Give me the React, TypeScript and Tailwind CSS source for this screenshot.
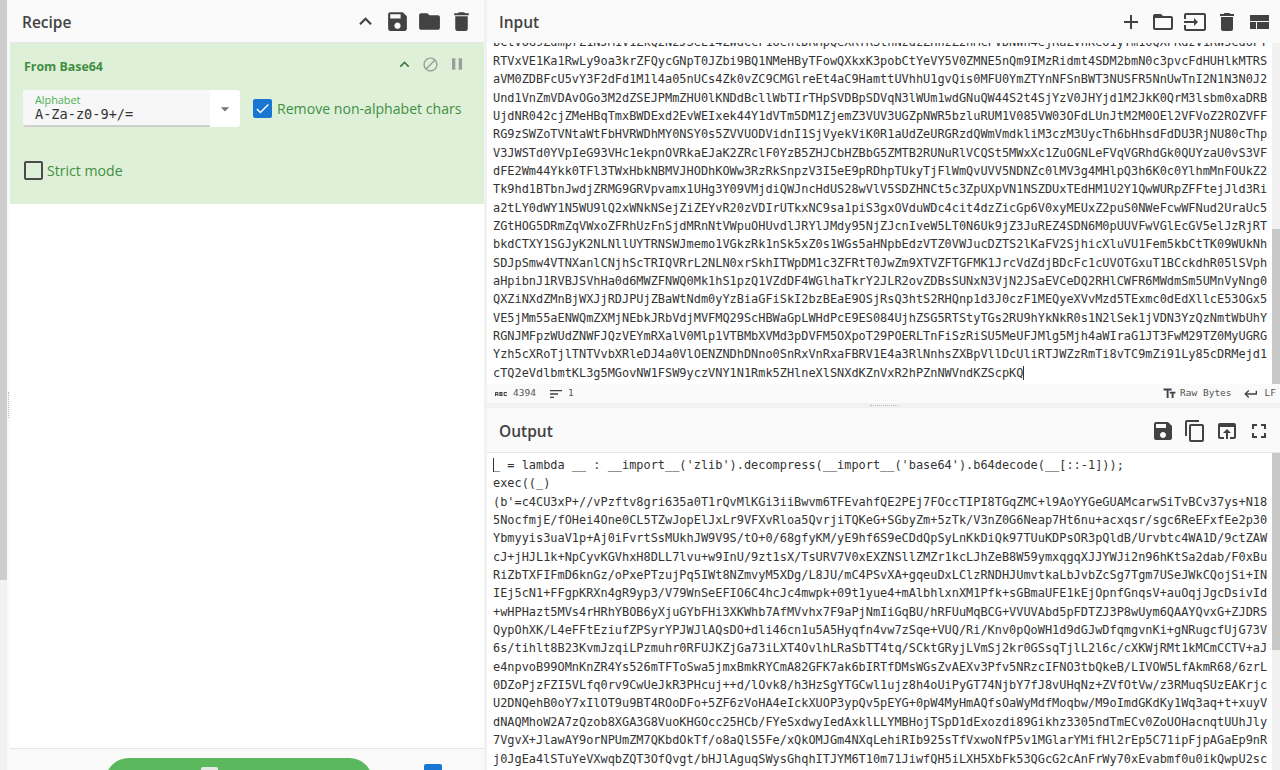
import React from "react";
import {
  MdKeyboardArrowUp, MdSave, MdFolder, MdDelete, MdBlock, MdPause, MdAdd, MdFolderOpen, MdInput,
  MdContentCopy, MdOpenInBrowser, MdFullscreen, MdKeyboardReturn, MdTextFields, MdSort, MdAbc, MdCheck, MdArrowDropDown,
} from "react-icons/md";

const inputLines = [
  "bCtVUG9ZdmprZ1NJM1V1ZkQ2N2JSeE14ZWdCcF1UenlDRHpQeXRTRStnNzdzZHnzZ2hMcFVDNWn4ejRaZVhKeU1yYm1oQXFRdzV1RW5CdUFT",
  "RTVxVE1Ka1RwLy9oa3krZFQycGNpT0JZbi9BQ1NMeHByTFowQXkxK3pobCtYeVY5V0ZMNE5nQm9IMzRidmt4SDM2bmN0c3pvcFdHUHlkMTRS",
  "aVM0ZDBFcU5vY3F2dFd1M1l4a05nUCs4Zk0vZC9CMGlreEt4aC9HamttUVhhU1gvQis0MFU0YmZTYnNFSnBWT3NUSFR5NnUwTnI2N1N3N0J2",
  "Und1VnZmVDAvOGo3M2dZSEJPMmZHU0lKNDdBcllWbTIrTHpSVDBpSDVqN3lWUm1wdGNuQW44S2t4SjYzV0JHYjd1M2JkK0QrM3lsbm0xaDRB",
  "UjdNR042cjZMeHBqTmxBWDExd2EvWEIxek44Y1dVTm5DM1ZjemZ3VUV3UGZpNWR5bzluRUM1V085VW03OFdLUnJtM2M0OEl2VFVoZ2ROZVFF",
  "RG9zSWZoTVNtaWtFbHVRWDhMY0NSY0s5ZVVUODVidnI1SjVyekViK0R1aUdZeURGRzdQWmVmdkliM3czM3UycTh6bHhsdFdDU3RjNU80cThp",
  "V3JWSTd0YVpIeG93VHc1ekpnOVRkaEJaK2ZRclF0YzB5ZHJCbHZBbG5ZMTB2RUNuRlVCQSt5MWxXc1ZuOGNLeFVqVGRhdGk0QUYzaU0vS3VF",
  "dFE2Wm44Ykk0TFl3TWxHbkNBMVJHODhKOWw3RzRkSnpzV3I5eE9pRDhpTUkyTjFlWmQvUVV5NDNZc0lMV3g4MHlpQ3h6K0c0YlhmMnFOUkZ2",
  "Tk9hd1BTbnJwdjZRMG9GRVpvamx1UHg3Y09VMjdiQWJncHdUS28wVlV5SDZHNCt5c3ZpUXpVN1NSZDUxTEdHM1U2Y1QwWURpZFFtejJld3Ri",
  "a2tLY0dWY1N5WU9lQ2xWNkNSejZiZEYvR20zVDIrUTkxNC9sa1piS3gxOVduWDc4cit4dzZicGp6V0xyMEUxZ2puS0NWeFcwWFNud2UraUc5",
  "ZGtHOG5DRmZqVWxoZFRhUzFnSjdMRnNtVWpuOHUvdlJRYlJMdy95NjZJcnIveW5LT0N6Uk9jZ3JuREZ4SDN6M0pUUVFwVGlEcGV5elJzRjRT",
  "bkdCTXY1SGJyK2NLNllUYTRNSWJmemo1VGkzRk1nSk5xZ0s1WGs5aHNpbEdzVTZ0VWJucDZTS2lKaFV2SjhicXluVU1Fem5kbCtTK09WUkNh",
  "SDJpSmw4VTNXanlCNjhScTRIQVRrL2NLN0xrSkhITWpDM1c3ZFRtT0JwZm9XTVZFTGFMK1JrcVdZdjBDcFc1cUVOTGxuT1BCckdhR05lSVph",
  "aHpibnJ1RVBJSVhHa0d6MWZFNWQ0Mk1hS1pzQ1VZdDF4WGlhaTkrY2JLR2ovZDBsSUNxN3VjN2JSaEVCeDQ2RHlCWFR6MWdmSm5UMnVyNng0",
  "QXZiNXdZMnBjWXJjRDJPUjZBaWtNdm0yYzBiaGFiSkI2bzBEaE9OSjRsQ3htS2RHQnp1d3J0czF1MEQyeXVvMzd5TExmc0dEdXllcE53OGx5",
  "VE5jMm55aENWQmZXMjNEbkJRbVdjMVFMQ29ScHBWaGpLWHdPcE9ES084UjhZSG5RTStyTGs2RU9hYkNkR0s1N2lSek1jVDN3YzQzNmtWbUhY",
  "RGNJMFpzWUdZNWFJQzVEYmRXalV0Mlp1VTBMbXVMd3pDVFM5OXpoT29POERLTnFiSzRiSU5MeUFJMlg5Mjh4aWIraG1JT3FwM29TZ0MyUGRG",
  "Yzh5cXRoTjlTNTVvbXRleDJ4a0VlOENZNDhDNno0SnRxVnRxaFBRV1E4a3RlNnhsZXBpVllDcUliRTJWZzRmTi8vTC9mZi91Ly85cDRMejd1",
  "cTQ2eVdlbmtKL3g5MGovNW1FSW9yczVNY1N1Rmk5ZHlneXlSNXdKZnVxR2hPZnNWVndKZScpKQ",
];

const outputLines = [
  "_ = lambda __ : __import__('zlib').decompress(__import__('base64').b64decode(__[::-1]));",
  "exec((_)",
  "(b'=c4CU3xP+//vPzftv8gri635a0T1rQvMlKGi3iiBwvm6TFEvahfQE2PEj7FOccTIPI8TGqZMC+l9AoYYGeGUAMcarwSiTvBCv37ys+N18",
  "5NocfmjE/fOHei4One0CL5TZwJopElJxLr9VFXvRloa5QvrjiTQKeG+SGbyZm+5zTk/V3nZ0G6Neap7Ht6nu+acxqsr/sgc6ReEFxfEe2p30",
  "Ybmyyis3uaV1p+Aj0iFvrtSsMUkhJW9V9S/tO+0/68gfyKM/yE9hf6S9eCDdQpSyLnKkDiQk97TUuKDPsOR3pQldB/Urvbtc4WA1D/9ctZAW",
  "cJ+jHJL1k+NpCyvKGVhxH8DLL7lvu+w9InU/9zt1sX/TsURV7V0xEXZNSllZMZr1kcLJhZeB8W59ymxqgqXJJYWJi2n96hKtSa2dab/F0xBu",
  "RiZbTXFIFmD6knGz/oPxePTzujPq5IWt8NZmvyM5XDg/L8JU/mC4PSvXA+gqeuDxLClzRNDHJUmvtkaLbJvbZcSg7Tgm7USeJWkCQojSi+IN",
  "IEj5cN1+FFgpKRXn4gR9yp3/V79WnSeEFIO6C4hcJc4mwpk+09t1yue4+mAlbhlxnXM1Pfk+sGBmaUFE1kEjOpnfGnqsV+auOqjJgcDsivId",
  "+wHPHazt5MVs4rHRhYBOB6yXjuGYbFHi3XKWhb7AfMVvhx7F9aPjNmIiGqBU/hRFUuMqBCG+VVUVAbd5pFDTZJ3P8wUym6QAAYQvxG+ZJDRS",
  "QypOhXK/L4eFFtEziufZPSyrYPJWJlAQsDO+dli46cn1u5A5Hyqfn4vw7zSqe+VUQ/Ri/Knv0pQoWH1d9dGJwDfqmgvnKi+gNRugcfUjG73V",
  "6s/tihlt8B23KvmJzqiLPzmuhr0RFUJKZjGa73iLXT4OvlhLRaSbTT4tq/SCktGRyjLVmSj2kr0GSsqTjlL2l6c/cXKWjRMt1kMCmCCTV+aJ",
  "e4npvoB99OMnKnZR4Ys526mTFToSwa5jmxBmkRYCmA82GFK7ak6bIRTfDMsWGsZvAEXv3Pfv5NRzcIFNO3tbQkeB/LIVOW5LfAkmR68/6zrL",
  "0DZoPjzFZI5VLfq0rv9CwUeJkR3PHcuj++d/lOvk8/h3HzSgYTGCwl1ujz8h4oUiPyGT74NjbY7fJ8vUHqNz+ZVfOtVw/z3RMuqSUzEAKrjc",
  "U2DNQehB0oY7xIlOT9u9BT4ROoDFo+5ZF6zVoHA4eIckXUOP3ypQv5pEYG+0pW4MyHmAQfsOaWyMdfMoqbw/M9oImdGKdKy1Wq3aq+t+xuyV",
  "dNAQMhoW2A7zQzob8XGA3G8VuoKHGOcc25HCb/FYeSxdwyIedAxklLLYMBHojTSpD1dExozdi89Gikhz3305ndTmECv0ZoUOHacnqtUUhJly",
  "7VgvX+JlawAY9orNPUmZM7QKbdOkTf/o8aQlS5Fe/xQkOMJGm4NXqLehiRIb925sTfVxwoNfP5v1MGlarYMifHl2rEp5C71ipFjpAGaEp9nR",
  "j0JgEa4lSTuYeVXwqbZQT3OfQvgt/bHJlAguqSWysGhqhITJYM6T10m71JiwfQH5iLXH5XbFk53QGcG2cAnFrWy70xEvabmf0u0ikQwpU2sc",
];

const mono = "font-['DejaVu_Sans_Mono',monospace]";
const sans = "font-['Open_Sans',sans-serif]";

function Lines({ lines, caretEnd, caretStart }: { lines: string[]; caretEnd?: boolean; caretStart?: boolean }) {
  return (
    <div className={`${mono} text-[11.92px] leading-[18.35px] text-[#333] whitespace-pre`}>
      {lines.map((l, i) => (
        <div key={i}>
          {caretStart && i === 0 ? <span className="border-l border-[#333] -mr-px" /> : null}
          {l}
          {caretEnd && i === lines.length - 1 ? <span className="border-r border-[#333]" /> : null}
        </div>
      ))}
    </div>
  );
}

function Scrollbar({ top, thumb }: { top: string; thumb: string }) {
  return (
    <div className="w-[8px] shrink-0 bg-[#f1f1f1] flex flex-col">
      <div className={top} />
      <div className={`${thumb} bg-[#c8c8c8]`} />
    </div>
  );
}

function ViewCompact() {
  return (
    <svg width="24" height="24" viewBox="0 0 24 24" fill="currentColor">
      <path d="M3 19h6v-7H3v7zm7 0h12v-7H10v7zM3 5v6h19V5H3z" />
    </svg>
  );
}

export default function App() {
  return (
    <div className={`flex h-[770px] w-[1280px] overflow-hidden bg-white text-[#424242] ${sans}`}>
      <div className="w-[10px] shrink-0 flex bg-[#fafafa]">
        <div className="w-[7px] bg-[#f1f1f1]">
          <div className="h-[580px] bg-[#cdcdcd]" />
        </div>
        <div className="flex-1 flex items-center justify-center pt-[40px]">
          <div className="h-[26px] border-l border-dotted border-[#bbb]" />
        </div>
      </div>

      <div className="w-[474px] shrink-0 flex flex-col">
        <div className="h-[43px] shrink-0 bg-[#fafafa] flex items-center pl-[12px] pr-[10px] border-b border-[#e6e6e6]">
          <span className="text-[15.5px] font-semibold flex-1 pt-[3px]">Recipe</span>
          <div className="flex items-center gap-[7px] text-[#424242]">
            <MdKeyboardArrowUp size={25} />
            <MdSave size={25} />
            <MdFolder size={25} />
            <MdDelete size={25} />
          </div>
        </div>

        <div className="h-[161px] shrink-0 bg-[#dff0d8] px-[13px] pt-[11px] text-[#3f8f42]">
          <div className="flex items-center h-[20px]">
            <span className="flex-1 font-bold text-[12.4px] pl-px pt-[6px]">From Base64</span>
            <div className="flex items-center gap-[8px] pr-[4px]">
              <MdKeyboardArrowUp size={19} className="text-[#3c763d]" />
              <MdBlock size={17} className="text-[#9a9f9a]" />
              <MdPause size={20} className="text-[#9a9f9a]" />
            </div>
          </div>
          <div className="flex items-center mt-[16px]">
            <div className="flex w-[217px] h-[37px] rounded-[3px] overflow-hidden bg-white">
              <div className="w-[187px] bg-[#f7f7f7] border-b-2 border-[#cfcfcf] pl-[12px] pt-[3px]">
                <div className="text-[10.8px] leading-[13px] text-[#4caf50]">Alphabet</div>
                <div className={`${mono} text-[13.6px] leading-[17px] text-[#333]`}>A-Za-z0-9+/=</div>
              </div>
              <div className="flex-1 flex items-center justify-center text-[#777]">
                <MdArrowDropDown size={20} />
              </div>
            </div>
            <div className="w-[19px] h-[19px] ml-[13px] rounded-[2px] bg-[#1976d2] flex items-center justify-center text-white">
              <MdCheck size={17} />
            </div>
            <span className="ml-[5px] text-[14.1px]">Remove non-alphabet chars</span>
          </div>
          <div className="flex items-center mt-[33px] pl-px">
            <div className="w-[19px] h-[19px] rounded-[2px] border-2 border-[#4a4a4a]" />
            <span className="ml-[4px] text-[14.1px]">Strict mode</span>
          </div>
        </div>

        <div className="flex-1" />

        <div className="h-[22px] shrink-0 bg-[#fafafa] border-t border-[#e6e6e6] flex items-start pt-[9px]">
          <div className="ml-[95px] w-[268px] h-[24px] shrink-0 bg-[#5cb85c] rounded-t-[24px] flex justify-center pt-[9px]">
            <div className="w-[17px] h-[12px] bg-[#e8e8e8] rounded-[2px] mr-[60px]" />
          </div>
          <div className="ml-[51px] mt-[6px] w-[18px] h-[18px] rounded-[2px] bg-[#1976d2]" />
        </div>
      </div>

      <div className="w-[3px] shrink-0 bg-[#f1f1f1]" />

      <div className="flex-1 min-w-0 flex flex-col">
        <div className="h-[384px] shrink-0 flex flex-col">
          <div className="h-[43px] shrink-0 bg-[#fafafa] flex items-center pl-[12px] pr-[9px]">
            <span className="text-[15.5px] font-semibold flex-1 pt-[3px]">Input</span>
            <div className="flex items-center gap-[8px]">
              <MdAdd size={24} />
              <MdFolderOpen size={24} />
              <MdInput size={24} />
              <MdDelete size={24} />
              <ViewCompact />
            </div>
          </div>
          <div className="flex-1 min-h-0 flex">
            <div className="flex-1 min-w-0 overflow-hidden flex flex-col justify-end pl-[6px] pb-[2px]">
              <Lines lines={inputLines} caretEnd />
            </div>
            <Scrollbar top="h-[186px]" thumb="flex-1" />
          </div>
        </div>

        <div className="h-[19px] shrink-0 bg-[#fafafa] flex items-center pl-[6px] pr-[4px] text-[#555]">
          <MdAbc size={16} className="text-[#424242]" />
          <span className={`${mono} text-[9.5px] ml-[4px]`}>4394</span>
          <MdSort size={16} className="ml-[12px] text-[#424242]" />
          <span className={`${mono} text-[9.5px] ml-[4px]`}>1</span>
          <span className="flex-1" />
          <MdTextFields size={15} className="text-[#424242]" />
          <span className={`${mono} text-[9.5px] ml-[3px]`}>Raw Bytes</span>
          <MdKeyboardReturn size={16} className="ml-[11px] text-[#424242]" />
          <span className={`${mono} text-[9.5px] ml-[6px]`}>LF</span>
        </div>

        <div className="h-[5px] shrink-0 bg-[#f1f1f1] flex items-center justify-center">
          <div className="w-[28px] border-t border-dotted border-[#bbb]" />
        </div>

        <div className="flex-1 min-h-0 flex flex-col">
          <div className="h-[45px] shrink-0 bg-[#fafafa] flex items-center pl-[12px] pr-[9px] pt-[2px] border-b border-[#e6e6e6]">
            <span className="text-[15.5px] font-semibold flex-1 pt-[2px]">Output</span>
            <div className="flex items-center gap-[8px]">
              <MdSave size={24} />
              <MdContentCopy size={24} />
              <MdOpenInBrowser size={24} />
              <MdFullscreen size={24} />
            </div>
          </div>
          <div className="flex-1 min-h-0 flex">
            <div className="flex-1 min-w-0 overflow-hidden pl-[6px] pt-[3px]">
              <Lines lines={outputLines} caretStart />
            </div>
            <Scrollbar top="h-0" thumb="h-[197px]" />
          </div>
        </div>
      </div>
    </div>
  );
}
